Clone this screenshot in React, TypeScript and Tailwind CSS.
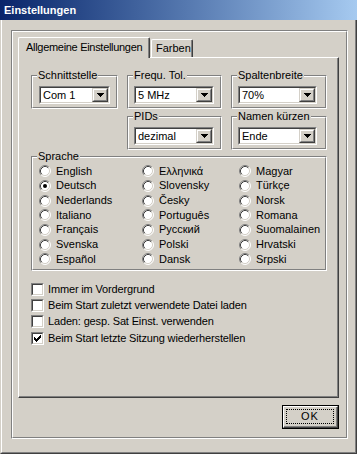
import React from "react";

const Arrow = () => (
  <svg width="7" height="4" viewBox="0 0 7 4" shapeRendering="crispEdges">
    <rect x="0" y="0" width="7" height="1" fill="#000" />
    <rect x="1" y="1" width="5" height="1" fill="#000" />
    <rect x="2" y="2" width="3" height="1" fill="#000" />
    <rect x="3" y="3" width="1" height="1" fill="#000" />
  </svg>
);

const Combo = ({ value, w }: { value: string; w: string }) => (
  <div className={`${w} h-[18px] flex border border-t-[#808080] border-l-[#808080] border-r-white border-b-white`}>
    <div className="flex-1 flex bg-white border border-t-[#404040] border-l-[#404040] border-r-[#d4d0c8] border-b-[#d4d0c8]">
      <div className="flex-1 flex items-center pl-[2px] leading-[14px]">{value}</div>
      <div className="w-[16px] flex border border-t-[#d4d0c8] border-l-[#d4d0c8] border-r-[#404040] border-b-[#404040] bg-[#d4d0c8]">
        <div className="flex-1 flex items-center justify-center border border-t-white border-l-white border-r-[#808080] border-b-[#808080]">
          <Arrow />
        </div>
      </div>
    </div>
  </div>
);

const Group = ({
  label,
  className,
  children,
}: {
  label: string;
  className: string;
  children?: React.ReactNode;
}) => (
  <div className={`relative flex border border-t-[#808080] border-l-[#808080] border-r-white border-b-white ${className}`}>
    <div className="flex-1 flex flex-col border border-t-white border-l-white border-r-[#808080] border-b-[#808080]">
      {children}
    </div>
    <div className="absolute top-[-7px] left-[5px] px-[1px] bg-[#d4d0c8] leading-[13px]">{label}</div>
  </div>
);

const Radio = ({ checked }: { checked?: boolean }) => (
  <svg width="12" height="12" viewBox="0 0 12 12" className="shrink-0">
    <circle cx="6" cy="6" r="5" fill="#fff" />
    <path d="M2.11 9.89 A5.5 5.5 0 0 1 9.89 2.11" fill="none" stroke="#808080" strokeWidth="1" />
    <path d="M9.89 2.11 A5.5 5.5 0 0 1 2.11 9.89" fill="none" stroke="#ffffff" strokeWidth="1" />
    <path d="M2.82 9.18 A4.5 4.5 0 0 1 9.18 2.82" fill="none" stroke="#404040" strokeWidth="1" />
    <path d="M9.18 2.82 A4.5 4.5 0 0 1 2.82 9.18" fill="none" stroke="#d4d0c8" strokeWidth="1" />
    {checked && <circle cx="6" cy="6" r="2" fill="#000" />}
  </svg>
);

const Check = ({ checked }: { checked?: boolean }) => (
  <div className="w-[13px] h-[13px] shrink-0 flex border border-t-[#808080] border-l-[#808080] border-r-white border-b-white">
    <div className="flex-1 flex items-center justify-center bg-white border border-t-[#404040] border-l-[#404040] border-r-[#d4d0c8] border-b-[#d4d0c8]">
      {checked && (
        <svg width="7" height="7" viewBox="0 0 7 7" shapeRendering="crispEdges">
          <rect x="0" y="2" width="1" height="3" fill="#000" />
          <rect x="1" y="3" width="1" height="3" fill="#000" />
          <rect x="2" y="4" width="1" height="3" fill="#000" />
          <rect x="3" y="3" width="1" height="3" fill="#000" />
          <rect x="4" y="2" width="1" height="3" fill="#000" />
          <rect x="5" y="1" width="1" height="3" fill="#000" />
          <rect x="6" y="0" width="1" height="3" fill="#000" />
        </svg>
      )}
    </div>
  </div>
);

const langs: { name: string; checked?: boolean }[][] = [
  [
    { name: "English" },
    { name: "Deutsch", checked: true },
    { name: "Nederlands" },
    { name: "Italiano" },
    { name: "Français" },
    { name: "Svenska" },
    { name: "Español" },
  ],
  [
    { name: "Ελληνικά" },
    { name: "Slovensky" },
    { name: "Česky" },
    { name: "Português" },
    { name: "Русский" },
    { name: "Polski" },
    { name: "Dansk" },
  ],
  [
    { name: "Magyar" },
    { name: "Türkçe" },
    { name: "Norsk" },
    { name: "Romana" },
    { name: "Suomalainen" },
    { name: "Hrvatski" },
    { name: "Srpski" },
  ],
];

const checks = [
  { t: "Immer im Vordergrund" },
  { t: "Beim Start zuletzt verwendete Datei laden" },
  { t: "Laden: gesp. Sat Einst. verwenden" },
  { t: "Beim Start letzte Sitzung wiederherstellen", c: true },
];

export default function App() {
  return (
    <div className="w-[357px] h-[454px] bg-[#d4d0c8] flex flex-col overflow-hidden text-black text-[11px] leading-[13px] font-['Liberation_Sans',Arial,sans-serif]">
      <div className="h-[20px] shrink-0 bg-linear-to-r from-[#0a246a] to-[#a6caf0] flex items-center pl-[4px] text-white font-bold">
        Einstellungen
      </div>
      <div className="flex-1 flex border-l border-l-[#d4d0c8] border-r border-r-[#404040] border-b border-b-[#404040]">
        <div className="flex-1 flex flex-col border-l border-l-white border-r border-r-[#808080] border-b border-b-[#808080] pl-[9px] pt-[10px]">
          {/* etched frame */}
          <div className="w-[337px] h-[409px] flex border border-t-[#808080] border-l-[#808080] border-r-white border-b-white">
            <div className="flex-1 flex flex-col border border-t-white border-l-white border-r-[#808080] border-b-[#808080] pl-[5px] pt-[5px]">
              {/* tabs */}
              <div className="h-[20px] flex items-end">
                <div className="relative z-10 w-[132px] h-[21px] mb-[-1px] flex bg-[#d4d0c8] border-t border-l border-t-white border-l-white border-r border-r-[#404040] rounded-tl-[2px] rounded-tr-[2px]">
                  <div className="flex-1 flex items-center pl-[7px] pb-[1px] border-r border-r-[#808080] tracking-[-0.3px] whitespace-nowrap">
                    Allgemeine Einstellungen
                  </div>
                </div>
                <div className="ml-[1px] w-[42px] h-[18px] flex border-t border-l border-t-white border-l-white border-r border-r-[#404040] rounded-tl-[2px] rounded-tr-[2px]">
                  <div className="flex-1 flex items-center pl-[4px] border-r border-r-[#808080]">Farben</div>
                </div>
              </div>
              {/* panel */}
              <div className="w-[321px] h-[341px] flex border-t border-l border-t-white border-l-white border-r border-b border-r-[#404040] border-b-[#404040]">
                <div className="flex-1 flex flex-col border-r border-b border-r-[#808080] border-b-[#808080] pl-[12px] pt-[17px]">
                  <div className="grid grid-cols-[87px_95px_96px] grid-rows-[34px_34px] gap-x-[9px] gap-y-[7px]">
                    <Group label="Schnittstelle" className="">
                      <div className="pl-[6px] pt-[9px]">
                        <Combo value="Com 1" w="w-[71px]" />
                      </div>
                    </Group>
                    <Group label="Frequ. Tol." className="">
                      <div className="pl-[5px] pt-[9px]">
                        <Combo value="5 MHz" w="w-[80px]" />
                      </div>
                    </Group>
                    <Group label="Spaltenbreite" className="">
                      <div className="pl-[5px] pt-[9px]">
                        <Combo value="70%" w="w-[79px]" />
                      </div>
                    </Group>
                    <div />
                    <Group label="PIDs" className="">
                      <div className="pl-[5px] pt-[9px]">
                        <Combo value="dezimal" w="w-[80px]" />
                      </div>
                    </Group>
                    <Group label="Namen kürzen" className="">
                      <div className="pl-[5px] pt-[9px]">
                        <Combo value="Ende" w="w-[79px]" />
                      </div>
                    </Group>
                  </div>
                  <Group label="Sprache" className="mt-[6px] w-[296px] h-[115px]">
                    <div className="flex pl-[6px] pt-[6px]">
                      {langs.map((col, i) => (
                        <div
                          key={i}
                          className={`flex flex-col ${i === 0 ? "w-[103px]" : i === 1 ? "w-[97px]" : "flex-1"}`}
                        >
                          {col.map((l) => (
                            <div key={l.name} className="h-[14.67px] flex items-center gap-[5px]">
                              <Radio checked={l.checked} />
                              <span>{l.name}</span>
                            </div>
                          ))}
                        </div>
                      ))}
                    </div>
                  </Group>
                  <div className="mt-[10px] flex flex-col">
                    {checks.map((c) => (
                      <div key={c.t} className="h-[16.33px] flex items-center gap-[4px]">
                        <Check checked={c.c} />
                        <span className="tracking-[-0.15px]">{c.t}</span>
                      </div>
                    ))}
                  </div>
                </div>
              </div>
              {/* OK button */}
              <div className="w-[321px] flex justify-end mt-[7px]">
                <div className="w-[57px] h-[24px] flex border border-black">
                  <div className="flex-1 flex border-t border-l border-t-white border-l-white border-r border-b border-r-[#404040] border-b-[#404040]">
                    <div className="flex-1 flex p-[2px] border-r border-b border-r-[#808080] border-b-[#808080]">
                      <div className="flex-1 flex items-center justify-center border border-dotted border-black tracking-[1px]">
                        OK
                      </div>
                    </div>
                  </div>
                </div>
              </div>
            </div>
          </div>
        </div>
      </div>
    </div>
  );
}
